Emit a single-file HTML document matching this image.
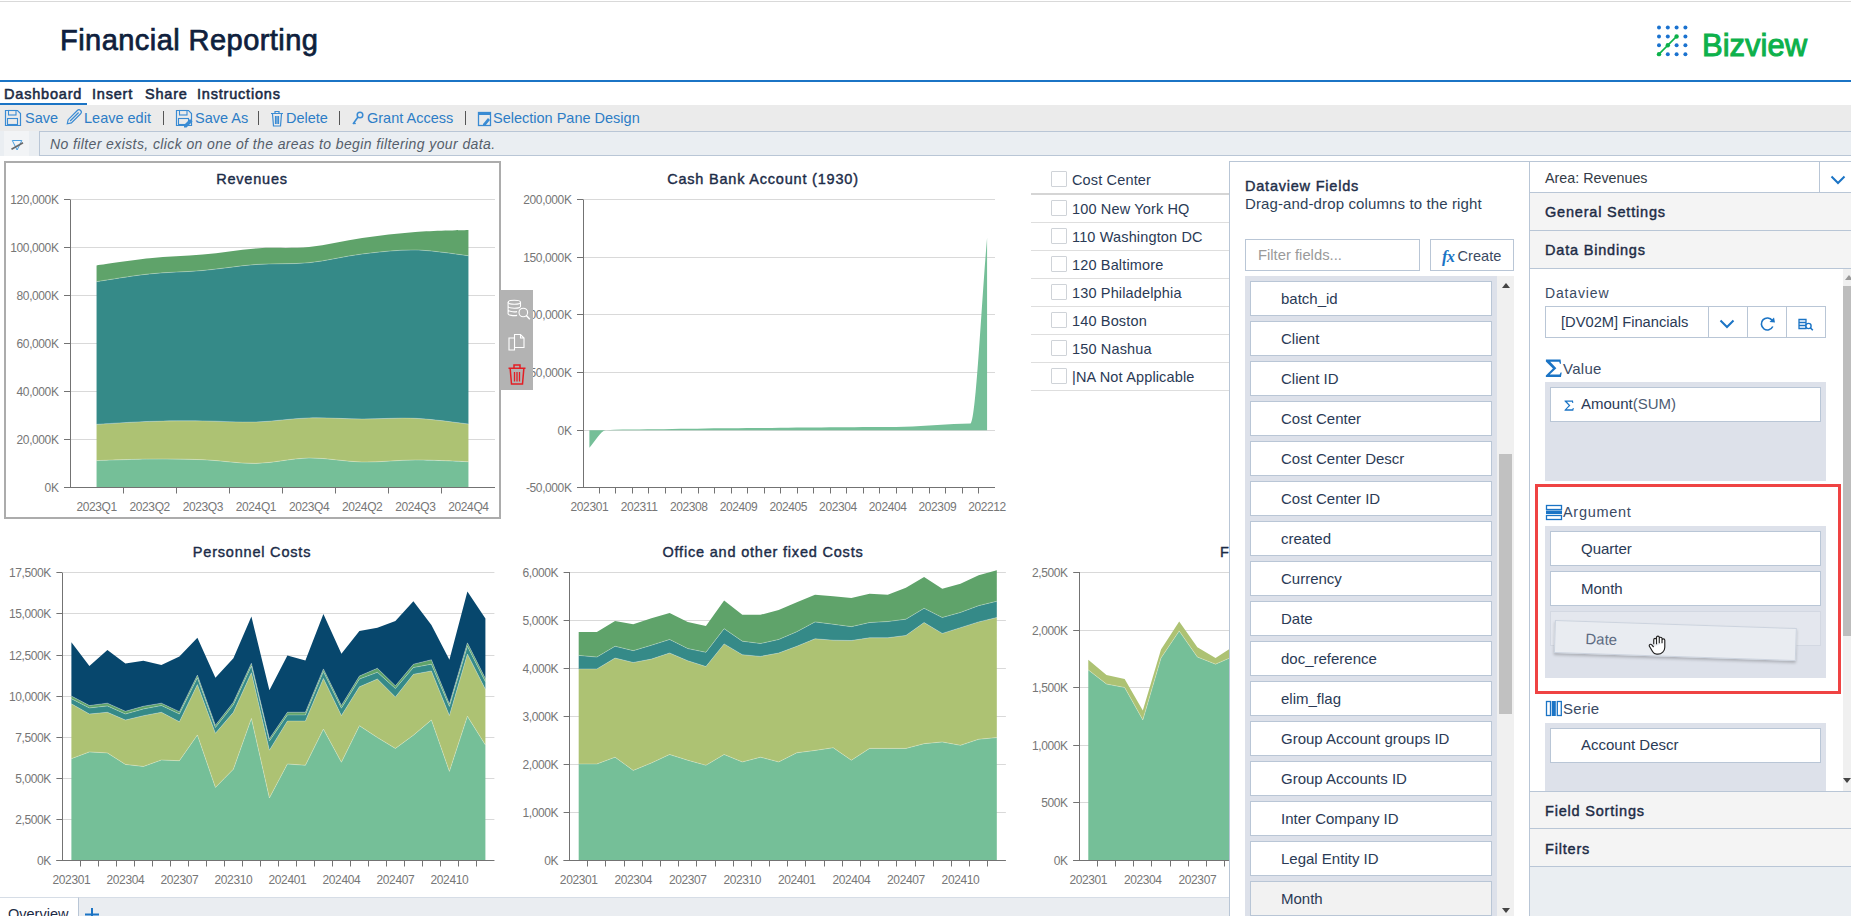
<!DOCTYPE html>
<html><head><meta charset="utf-8">
<style>
*{box-sizing:border-box;}
html,body{margin:0;padding:0;}
body{width:1851px;height:916px;overflow:hidden;position:relative;background:#fff;font-family:"Liberation Sans",sans-serif;color:#1d2b45;}
.a{position:absolute;}
.t{position:absolute;white-space:nowrap;line-height:1;}
#topline{left:0;top:1px;width:1851px;height:1px;background:#d9d9d9;}
#title{left:60px;top:26px;font-size:29px;color:#0f1f3d;-webkit-text-stroke:0.75px #0f1f3d;letter-spacing:0.45px;}
#blueline{left:0;top:80px;width:1851px;height:2px;background:#1b74c5;}
.tab{top:87px;font-size:14.5px;color:#1b2a44;-webkit-text-stroke:0.55px #1b2a44;letter-spacing:0.8px;}
#tabul{left:0;top:103px;width:87px;height:2px;background:#1b74c5;}
#toolbar{left:0;top:105px;width:1851px;height:26px;background:#ebebeb;}
.tb{top:111px;font-size:14.5px;color:#2d7dc6;}
.sep{top:111px;width:1px;height:14px;background:#555;}
#filterbar{left:0;top:131px;width:1851px;height:25px;background:#eaeef2;}
#filtericon{left:4px;top:131px;width:25px;height:25px;background:#f2f4f6;}
#filterinput{left:39px;top:131px;width:1820px;height:25px;border:1px solid #b9c6d6;}
#filtertext{left:50px;top:137px;font-size:14px;font-style:italic;color:#555e6b;letter-spacing:0.4px;}
#tabbar{left:0;top:897px;width:1229px;height:19px;background:#eaedf1;border-top:1px solid #d6dde6;}
#ovtab{left:0;top:897px;width:79px;height:19px;background:#fff;border-right:1px solid #b9c6d6;border-top:1px solid #d6dde6;}
svg text{font-family:"Liberation Sans",sans-serif;}
.yl{font-size:12px;fill:#767676;letter-spacing:-0.4px;}
.xl{font-size:12px;fill:#767676;letter-spacing:-0.4px;}
.ct{font-size:14.5px;fill:#1c2c48;stroke:#1c2c48;stroke-width:0.4px;letter-spacing:0.8px;}
#revbox{left:4px;top:161px;width:497px;height:358px;border:2px solid #acacac;}
#ftool{left:500px;top:290px;width:33px;height:100px;background:#b3b3b3;}
/* cost center list */
.ccrow{left:1031px;width:198px;height:1px;background:#dedede;}
.cb{width:16px;height:16px;border:1px solid #cfd3d8;background:#fff;border-radius:1px;}
.cct{font-size:14.5px;color:#2a3a55;letter-spacing:0.15px;}
/* dataview fields panel */
#dvp{left:1229px;top:161px;width:301px;height:755px;background:#fff;border-left:1px solid #b9c6d6;border-top:1px solid #b9c6d6;}
#dvtitle{left:1245px;top:179px;font-size:14.5px;color:#1f2f4a;-webkit-text-stroke:0.42px #1f2f4a;letter-spacing:0.78px;}
#dvsub{left:1245px;top:196px;font-size:15px;color:#2f3f58;letter-spacing:0.12px;}
#filt{left:1245px;top:239px;width:175px;height:32px;border:1px solid #b9c6d6;background:#fff;}
#filtph{left:1258px;top:248px;font-size:14.8px;color:#9a9a9a;}
#create{left:1430px;top:239px;width:84px;height:32px;border:1px solid #b9c6d6;background:#fff;}
#list{left:1245px;top:276px;width:252px;height:640px;background:#dde1ea;}
#lscroll{left:1497px;top:276px;width:17px;height:640px;background:#f0f0f0;}
#lthumb{left:1499px;top:454px;width:13px;height:260px;background:#c1c1c1;}
.fi{left:1250px;width:242px;height:35px;background:#fff;border:1px solid #b9c6d6;}
.fit{left:1281px;font-size:15px;color:#2a3a55;}
/* right panel */
#rp{left:1529px;top:161px;width:322px;height:755px;background:#eaeef2;border-left:1px solid #b9c6d6;border-top:1px solid #b9c6d6;}
.rrow{left:1530px;width:321px;background:#f4f4f4;border-bottom:1px solid #b9c6d6;}
.rh{left:1545px;font-size:14.5px;color:#1d2b45;-webkit-text-stroke:0.42px #1d2b45;letter-spacing:0.8px;}
.zone{left:1545px;width:281px;background:#dde1ea;}
.zi{left:1550px;width:271px;height:35px;background:#fff;border:1px solid #b9c6d6;}
.zit{left:1581px;font-size:15px;color:#2a3a55;}
.lab{font-size:14px;color:#3a4a64;}
</style></head><body>
<div class="a" id="topline"></div>
<div class="t" id="title">Financial Reporting</div>
<svg class="a" style="left:0;top:0" width="1851" height="80"><circle cx="1659" cy="27.6" r="2.0" fill="#1a72cf"/><circle cx="1667.8" cy="27.6" r="2.0" fill="#1a72cf"/><circle cx="1676.6" cy="27.6" r="2.0" fill="#1a72cf"/><circle cx="1685.4" cy="27.6" r="2.0" fill="#1a72cf"/><circle cx="1659" cy="36.45" r="2.0" fill="#1a72cf"/><circle cx="1667.8" cy="36.45" r="2.0" fill="#1a72cf"/><circle cx="1676.6" cy="36.45" r="2.2" fill="#0db14b"/><circle cx="1685.4" cy="36.45" r="2.0" fill="#1a72cf"/><circle cx="1659" cy="45.3" r="2.0" fill="#1a72cf"/><circle cx="1667.8" cy="45.3" r="2.2" fill="#0db14b"/><circle cx="1676.6" cy="45.3" r="2.0" fill="#1a72cf"/><circle cx="1685.4" cy="45.3" r="2.0" fill="#1a72cf"/><circle cx="1659" cy="54.15" r="2.2" fill="#0db14b"/><circle cx="1667.8" cy="54.15" r="2.0" fill="#1a72cf"/><circle cx="1676.6" cy="54.15" r="2.0" fill="#1a72cf"/><circle cx="1685.4" cy="54.15" r="2.0" fill="#1a72cf"/><line x1="1659" y1="54.1" x2="1676.6" y2="36.4" stroke="#0db14b" stroke-width="1.6"/></svg><div class="t" style="left:1702px;top:29.5px;font-size:31px;color:#0db14b;-webkit-text-stroke:1.0px #0db14b;letter-spacing:0px">Bizview</div>
<div class="a" id="blueline"></div>
<div class="t tab" style="left:4px">Dashboard</div>
<div class="t tab" style="left:92px">Insert</div>
<div class="t tab" style="left:145px">Share</div>
<div class="t tab" style="left:197px">Instructions</div>
<div class="a" id="tabul"></div>
<div class="a" id="toolbar"></div>
<svg class="a" style="left:0;top:105px" width="500" height="26"><path d="M5.5,5.5 h12 l3,3 v12 h-15 z" fill="none" stroke="#3a8bd3" stroke-width="1.2"/><rect x="8.5" y="5.5" width="7.5" height="4.5" fill="none" stroke="#3a8bd3" stroke-width="1.1"/><rect x="7.5" y="13.5" width="10" height="6" fill="none" stroke="#3a8bd3" stroke-width="1.1"/><g transform="translate(67.3,18.8) rotate(-45)" fill="none" stroke="#3a8bd3" stroke-width="1.2"><path d="M0,0 L3.5,-2.3 H16.5 a2.3,2.3 0 0 1 0,4.6 H3.5 Z"/><path d="M4,0 H16"/></g><path d="M176.5,5.5 h12 l3,3 v12 h-15 z" fill="none" stroke="#3a8bd3" stroke-width="1.2"/><rect x="179.5" y="5.5" width="7.5" height="4.5" fill="none" stroke="#3a8bd3" stroke-width="1.1"/><rect x="178.5" y="13.5" width="10" height="6" fill="none" stroke="#3a8bd3" stroke-width="1.1"/><path d="M184,20 l6,-6 l2.5,2.5 l-6,6 h-2.5z" fill="#3a8bd3"/><path d="M271,8.5 h12 M275,8.5 v-2 h4 v2 M272.5,9 l1,12 h7 l1,-12 M275.5,11 v8 M277,11 v8 M278.5,11 v8" fill="none" stroke="#3a8bd3" stroke-width="1.2"/><circle cx="360" cy="10" r="2.8" fill="none" stroke="#3a8bd3" stroke-width="1.5"/><path d="M358,12 l-5,7 M354,17.5 l1.5,1.5" stroke="#3a8bd3" stroke-width="1.6"/><rect x="478.5" y="7.5" width="12" height="13" fill="none" stroke="#3a8bd3" stroke-width="1.3"/><rect x="478" y="7" width="13" height="3" fill="#3a8bd3"/><path d="M483,19 l5,-6 l2,2 l-5,6 h-2z" fill="#3a8bd3"/></svg>
<div class="t tb" style="left:25px">Save</div>
<div class="t tb" style="left:84px">Leave edit</div>
<div class="a sep" style="left:163px"></div>
<div class="t tb" style="left:195px">Save As</div>
<div class="a sep" style="left:258px"></div>
<div class="t tb" style="left:286px">Delete</div>
<div class="a sep" style="left:339px"></div>
<div class="t tb" style="left:367px">Grant Access</div>
<div class="a sep" style="left:465px"></div>
<div class="t tb" style="left:493px">Selection Pane Design</div>
<div class="a" id="filterbar"></div>
<div class="a" id="filtericon"></div>
<div class="a" id="filterinput"></div>
<svg class="a" style="left:0;top:125px" width="39" height="31"><path d="M12.3,15.5 h9.5 l-4.7,9.5z" fill="none" stroke="#4a9fe0" stroke-width="1"/><line x1="11.5" y1="24.3" x2="23" y2="17.8" stroke="#6a6a6a" stroke-width="1.7"/></svg>
<div class="t" id="filtertext">No filter exists, click on one of the areas to begin filtering your data.</div>

<svg class="a" style="left:0;top:0" width="1851" height="916" viewBox="0 0 1851 916" shape-rendering="auto">
<line x1="70" y1="199.5" x2="495" y2="199.5" stroke="#d9d9d9"/>
<line x1="70" y1="247.5" x2="495" y2="247.5" stroke="#d9d9d9"/>
<line x1="70" y1="295.5" x2="495" y2="295.5" stroke="#d9d9d9"/>
<line x1="70" y1="343.5" x2="495" y2="343.5" stroke="#d9d9d9"/>
<line x1="70" y1="391.5" x2="495" y2="391.5" stroke="#d9d9d9"/>
<line x1="70" y1="439.5" x2="495" y2="439.5" stroke="#d9d9d9"/>
<line x1="70" y1="487.5" x2="495" y2="487.5" stroke="#d9d9d9"/>
<path d="M96.56,460.6 C105.42,460.35 131.98,459.25 149.69,459.1 C167.4,458.95 185.1,458.98 202.81,459.7 C220.52,460.42 238.23,463.68 255.94,463.4 C273.65,463.12 291.35,458.23 309.06,458 C326.77,457.77 344.48,461.67 362.19,462 C379.9,462.33 397.6,460.05 415.31,460 C433.02,459.95 459.58,461.42 468.44,461.7 L468.44,487.5 C459.58,487.5 433.02,487.5 415.31,487.5 C397.6,487.5 379.9,487.5 362.19,487.5 C344.48,487.5 326.77,487.5 309.06,487.5 C291.35,487.5 273.65,487.5 255.94,487.5 C238.23,487.5 220.52,487.5 202.81,487.5 C185.1,487.5 167.4,487.5 149.69,487.5 C131.98,487.5 105.42,487.5 96.56,487.5 Z" fill="#75bf98"/>
<path d="M96.56,424.3 C105.42,423.82 131.98,421.97 149.69,421.4 C167.4,420.83 185.1,420.8 202.81,420.9 C220.52,421 238.23,422.5 255.94,422 C273.65,421.5 291.35,418.4 309.06,417.9 C326.77,417.4 344.48,418.93 362.19,419 C379.9,419.07 397.6,417.47 415.31,418.3 C433.02,419.13 459.58,423.05 468.44,424 L468.44,461.7 C459.58,461.42 433.02,459.95 415.31,460 C397.6,460.05 379.9,462.33 362.19,462 C344.48,461.67 326.77,457.77 309.06,458 C291.35,458.23 273.65,463.12 255.94,463.4 C238.23,463.68 220.52,460.42 202.81,459.7 C185.1,458.98 167.4,458.95 149.69,459.1 C131.98,459.25 105.42,460.35 96.56,460.6 Z" fill="#adc273"/>
<path d="M96.56,281.6 C105.42,280.32 131.98,275.75 149.69,273.9 C167.4,272.05 185.1,272.07 202.81,270.5 C220.52,268.93 238.23,265.8 255.94,264.5 C273.65,263.2 291.35,264.45 309.06,262.7 C326.77,260.95 344.48,256.12 362.19,254 C379.9,251.88 397.6,249.72 415.31,250 C433.02,250.28 459.58,254.75 468.44,255.7 L468.44,424 C459.58,423.05 433.02,419.13 415.31,418.3 C397.6,417.47 379.9,419.07 362.19,419 C344.48,418.93 326.77,417.4 309.06,417.9 C291.35,418.4 273.65,421.5 255.94,422 C238.23,422.5 220.52,421 202.81,420.9 C185.1,420.8 167.4,420.83 149.69,421.4 C131.98,421.97 105.42,423.82 96.56,424.3 Z" fill="#358a88"/>
<path d="M96.56,265.4 C105.42,264.22 131.98,260.1 149.69,258.3 C167.4,256.5 185.1,256.25 202.81,254.6 C220.52,252.95 238.23,249.67 255.94,248.4 C273.65,247.13 291.35,248.73 309.06,247 C326.77,245.27 344.48,240.5 362.19,238 C379.9,235.5 397.6,233.33 415.31,232 C433.02,230.67 459.58,230.33 468.44,230 L468.44,255.7 C459.58,254.75 433.02,250.28 415.31,250 C397.6,249.72 379.9,251.88 362.19,254 C344.48,256.12 326.77,260.95 309.06,262.7 C291.35,264.45 273.65,263.2 255.94,264.5 C238.23,265.8 220.52,268.93 202.81,270.5 C185.1,272.07 167.4,272.05 149.69,273.9 C131.98,275.75 105.42,280.32 96.56,281.6 Z" fill="#5fa36a"/>
<path d="M96.56,460.6 C105.42,460.35 131.98,459.25 149.69,459.1 C167.4,458.95 185.1,458.98 202.81,459.7 C220.52,460.42 238.23,463.68 255.94,463.4 C273.65,463.12 291.35,458.23 309.06,458 C326.77,457.77 344.48,461.67 362.19,462 C379.9,462.33 397.6,460.05 415.31,460 C433.02,459.95 459.58,461.42 468.44,461.7" fill="none" stroke="#fff" stroke-opacity="0.35" stroke-width="0.8"/>
<path d="M96.56,424.3 C105.42,423.82 131.98,421.97 149.69,421.4 C167.4,420.83 185.1,420.8 202.81,420.9 C220.52,421 238.23,422.5 255.94,422 C273.65,421.5 291.35,418.4 309.06,417.9 C326.77,417.4 344.48,418.93 362.19,419 C379.9,419.07 397.6,417.47 415.31,418.3 C433.02,419.13 459.58,423.05 468.44,424" fill="none" stroke="#fff" stroke-opacity="0.35" stroke-width="0.8"/>
<path d="M96.56,281.6 C105.42,280.32 131.98,275.75 149.69,273.9 C167.4,272.05 185.1,272.07 202.81,270.5 C220.52,268.93 238.23,265.8 255.94,264.5 C273.65,263.2 291.35,264.45 309.06,262.7 C326.77,260.95 344.48,256.12 362.19,254 C379.9,251.88 397.6,249.72 415.31,250 C433.02,250.28 459.58,254.75 468.44,255.7" fill="none" stroke="#fff" stroke-opacity="0.35" stroke-width="0.8"/>
<line x1="70.5" y1="200" x2="70.5" y2="487.5" stroke="#737373"/>
<line x1="64" y1="487.5" x2="495" y2="487.5" stroke="#737373"/>
<line x1="64" y1="199.5" x2="70.5" y2="199.5" stroke="#737373"/>
<text x="58.5" y="204" text-anchor="end" class="yl">120,000K</text>
<line x1="64" y1="247.5" x2="70.5" y2="247.5" stroke="#737373"/>
<text x="58.5" y="252" text-anchor="end" class="yl">100,000K</text>
<line x1="64" y1="295.5" x2="70.5" y2="295.5" stroke="#737373"/>
<text x="58.5" y="300" text-anchor="end" class="yl">80,000K</text>
<line x1="64" y1="343.5" x2="70.5" y2="343.5" stroke="#737373"/>
<text x="58.5" y="348" text-anchor="end" class="yl">60,000K</text>
<line x1="64" y1="391.5" x2="70.5" y2="391.5" stroke="#737373"/>
<text x="58.5" y="396" text-anchor="end" class="yl">40,000K</text>
<line x1="64" y1="439.5" x2="70.5" y2="439.5" stroke="#737373"/>
<text x="58.5" y="444" text-anchor="end" class="yl">20,000K</text>
<line x1="64" y1="487.5" x2="70.5" y2="487.5" stroke="#737373"/>
<text x="58.5" y="492" text-anchor="end" class="yl">0K</text>
<line x1="123.5" y1="487.5" x2="123.5" y2="493.5" stroke="#737373"/>
<line x1="176.5" y1="487.5" x2="176.5" y2="493.5" stroke="#737373"/>
<line x1="229.5" y1="487.5" x2="229.5" y2="493.5" stroke="#737373"/>
<line x1="282.5" y1="487.5" x2="282.5" y2="493.5" stroke="#737373"/>
<line x1="335.5" y1="487.5" x2="335.5" y2="493.5" stroke="#737373"/>
<line x1="388.5" y1="487.5" x2="388.5" y2="493.5" stroke="#737373"/>
<line x1="441.5" y1="487.5" x2="441.5" y2="493.5" stroke="#737373"/>
<text x="96.56" y="511" text-anchor="middle" class="xl">2023Q1</text>
<text x="149.69" y="511" text-anchor="middle" class="xl">2023Q2</text>
<text x="202.81" y="511" text-anchor="middle" class="xl">2023Q3</text>
<text x="255.94" y="511" text-anchor="middle" class="xl">2024Q1</text>
<text x="309.06" y="511" text-anchor="middle" class="xl">2023Q4</text>
<text x="362.19" y="511" text-anchor="middle" class="xl">2024Q2</text>
<text x="415.31" y="511" text-anchor="middle" class="xl">2024Q3</text>
<text x="468.44" y="511" text-anchor="middle" class="xl">2024Q4</text>
<text x="252" y="184" text-anchor="middle" class="ct">Revenues</text>
<line x1="583" y1="199.5" x2="995" y2="199.5" stroke="#d9d9d9"/>
<line x1="583" y1="257.5" x2="995" y2="257.5" stroke="#d9d9d9"/>
<line x1="583" y1="314.5" x2="995" y2="314.5" stroke="#d9d9d9"/>
<line x1="583" y1="372.5" x2="995" y2="372.5" stroke="#d9d9d9"/>
<line x1="583" y1="430.5" x2="995" y2="430.5" stroke="#d9d9d9"/>
<line x1="583" y1="487.5" x2="995" y2="487.5" stroke="#d9d9d9"/>
<path d="M589.4,447.7 C594.92,441.87 600.45,430.59 605.97,430.2 C611.49,429.81 617.02,429.66 622.54,429.6 C628.06,429.54 633.59,429.54 639.11,429.5 C644.63,429.46 650.16,429.38 655.68,429.3 C661.2,429.22 666.73,429.08 672.25,429 C677.77,428.92 683.3,428.88 688.82,428.8 C694.34,428.72 699.87,428.58 705.39,428.5 C710.91,428.42 716.44,428.34 721.96,428.3 C727.48,428.26 733.01,428.24 738.53,428.2 C744.05,428.16 749.58,428.04 755.1,428 C760.62,427.96 766.15,427.94 771.67,427.9 C777.19,427.86 782.72,427.77 788.24,427.7 C793.76,427.63 799.29,427.54 804.81,427.5 C810.33,427.46 815.86,427.43 821.38,427.4 C826.9,427.37 832.43,427.33 837.95,427.3 C843.47,427.27 849,427.23 854.52,427.2 C860.04,427.17 865.57,427.13 871.09,427.1 C876.61,427.07 882.14,427.04 887.66,427 C893.18,426.96 898.71,426.91 904.23,426.8 C909.75,426.69 915.28,426.3 920.8,426 C926.32,425.7 931.85,425.33 937.37,425 C942.89,424.67 948.42,424.22 953.94,424 C959.46,423.78 964.99,423.83 970.51,423.5 C976.03,423.17 981.56,299.83 987.08,238 L987.08,430.2 C981.56,430.2 976.03,430.2 970.51,430.2 C964.99,430.2 959.46,430.2 953.94,430.2 C948.42,430.2 942.89,430.2 937.37,430.2 C931.85,430.2 926.32,430.2 920.8,430.2 C915.28,430.2 909.75,430.2 904.23,430.2 C898.71,430.2 893.18,430.2 887.66,430.2 C882.14,430.2 876.61,430.2 871.09,430.2 C865.57,430.2 860.04,430.2 854.52,430.2 C849,430.2 843.47,430.2 837.95,430.2 C832.43,430.2 826.9,430.2 821.38,430.2 C815.86,430.2 810.33,430.2 804.81,430.2 C799.29,430.2 793.76,430.2 788.24,430.2 C782.72,430.2 777.19,430.2 771.67,430.2 C766.15,430.2 760.62,430.2 755.1,430.2 C749.58,430.2 744.05,430.2 738.53,430.2 C733.01,430.2 727.48,430.2 721.96,430.2 C716.44,430.2 710.91,430.2 705.39,430.2 C699.87,430.2 694.34,430.2 688.82,430.2 C683.3,430.2 677.77,430.2 672.25,430.2 C666.73,430.2 661.2,430.2 655.68,430.2 C650.16,430.2 644.63,430.2 639.11,430.2 C633.59,430.2 628.06,430.2 622.54,430.2 C617.02,430.2 611.49,430.2 605.97,430.2 C600.45,430.2 594.92,430.2 589.4,430.2 Z" fill="#75bf98"/>
<line x1="583.5" y1="200" x2="583.5" y2="487.5" stroke="#737373"/>
<line x1="577" y1="487.5" x2="995" y2="487.5" stroke="#737373"/>
<line x1="577" y1="199.5" x2="583.5" y2="199.5" stroke="#737373"/>
<text x="571.5" y="204.1" text-anchor="end" class="yl">200,000K</text>
<line x1="577" y1="257.5" x2="583.5" y2="257.5" stroke="#737373"/>
<text x="571.5" y="261.7" text-anchor="end" class="yl">150,000K</text>
<line x1="577" y1="314.5" x2="583.5" y2="314.5" stroke="#737373"/>
<text x="571.5" y="319.3" text-anchor="end" class="yl">100,000K</text>
<line x1="577" y1="372.5" x2="583.5" y2="372.5" stroke="#737373"/>
<text x="571.5" y="376.9" text-anchor="end" class="yl">50,000K</text>
<line x1="577" y1="430.5" x2="583.5" y2="430.5" stroke="#737373"/>
<text x="571.5" y="434.5" text-anchor="end" class="yl">0K</text>
<line x1="577" y1="487.5" x2="583.5" y2="487.5" stroke="#737373"/>
<text x="571.5" y="492.1" text-anchor="end" class="yl">-50,000K</text>
<line x1="599.5" y1="487.5" x2="599.5" y2="493.5" stroke="#737373"/>
<line x1="615.5" y1="487.5" x2="615.5" y2="493.5" stroke="#737373"/>
<line x1="632.5" y1="487.5" x2="632.5" y2="493.5" stroke="#737373"/>
<line x1="648.5" y1="487.5" x2="648.5" y2="493.5" stroke="#737373"/>
<line x1="665.5" y1="487.5" x2="665.5" y2="493.5" stroke="#737373"/>
<line x1="681.5" y1="487.5" x2="681.5" y2="493.5" stroke="#737373"/>
<line x1="698.5" y1="487.5" x2="698.5" y2="493.5" stroke="#737373"/>
<line x1="714.5" y1="487.5" x2="714.5" y2="493.5" stroke="#737373"/>
<line x1="731.5" y1="487.5" x2="731.5" y2="493.5" stroke="#737373"/>
<line x1="747.5" y1="487.5" x2="747.5" y2="493.5" stroke="#737373"/>
<line x1="764.5" y1="487.5" x2="764.5" y2="493.5" stroke="#737373"/>
<line x1="780.5" y1="487.5" x2="780.5" y2="493.5" stroke="#737373"/>
<line x1="797.5" y1="487.5" x2="797.5" y2="493.5" stroke="#737373"/>
<line x1="813.5" y1="487.5" x2="813.5" y2="493.5" stroke="#737373"/>
<line x1="830.5" y1="487.5" x2="830.5" y2="493.5" stroke="#737373"/>
<line x1="846.5" y1="487.5" x2="846.5" y2="493.5" stroke="#737373"/>
<line x1="863.5" y1="487.5" x2="863.5" y2="493.5" stroke="#737373"/>
<line x1="879.5" y1="487.5" x2="879.5" y2="493.5" stroke="#737373"/>
<line x1="896.5" y1="487.5" x2="896.5" y2="493.5" stroke="#737373"/>
<line x1="912.5" y1="487.5" x2="912.5" y2="493.5" stroke="#737373"/>
<line x1="929.5" y1="487.5" x2="929.5" y2="493.5" stroke="#737373"/>
<line x1="945.5" y1="487.5" x2="945.5" y2="493.5" stroke="#737373"/>
<line x1="962.5" y1="487.5" x2="962.5" y2="493.5" stroke="#737373"/>
<line x1="978.5" y1="487.5" x2="978.5" y2="493.5" stroke="#737373"/>
<text x="589.4" y="511" text-anchor="middle" class="xl">202301</text>
<text x="639.11" y="511" text-anchor="middle" class="xl">202311</text>
<text x="688.82" y="511" text-anchor="middle" class="xl">202308</text>
<text x="738.53" y="511" text-anchor="middle" class="xl">202409</text>
<text x="788.24" y="511" text-anchor="middle" class="xl">202405</text>
<text x="837.95" y="511" text-anchor="middle" class="xl">202304</text>
<text x="887.66" y="511" text-anchor="middle" class="xl">202404</text>
<text x="937.37" y="511" text-anchor="middle" class="xl">202309</text>
<text x="987.08" y="511" text-anchor="middle" class="xl">202212</text>
<text x="763" y="183.5" text-anchor="middle" class="ct">Cash Bank Account (1930)</text>
<line x1="62.4" y1="572.5" x2="494.4" y2="572.5" stroke="#d9d9d9"/>
<line x1="62.4" y1="613.5" x2="494.4" y2="613.5" stroke="#d9d9d9"/>
<line x1="62.4" y1="655.5" x2="494.4" y2="655.5" stroke="#d9d9d9"/>
<line x1="62.4" y1="696.5" x2="494.4" y2="696.5" stroke="#d9d9d9"/>
<line x1="62.4" y1="737.5" x2="494.4" y2="737.5" stroke="#d9d9d9"/>
<line x1="62.4" y1="778.5" x2="494.4" y2="778.5" stroke="#d9d9d9"/>
<line x1="62.4" y1="819.5" x2="494.4" y2="819.5" stroke="#d9d9d9"/>
<line x1="62.4" y1="860.5" x2="494.4" y2="860.5" stroke="#d9d9d9"/>
<path d="M71.4,758.68 L89.4,751.91 L107.4,752.93 L125.4,764.43 L143.4,766.46 L161.4,760.03 L179.4,760.71 L197.4,734.99 L215.4,787.45 L233.4,769.17 L251.4,718.4 L269.4,797.94 L287.4,763.96 L305.4,765.31 L323.4,729.12 L341.4,762.27 L359.4,725.74 L377.4,737.57 L395.4,748.4 L413.4,735.21 L431.4,719.99 L449.4,771.4 L467.4,716.27 L485.4,745.02 L485.4,860.25 L467.4,860.25 L449.4,860.25 L431.4,860.25 L413.4,860.25 L395.4,860.25 L377.4,860.25 L359.4,860.25 L341.4,860.25 L323.4,860.25 L305.4,860.25 L287.4,860.25 L269.4,860.25 L251.4,860.25 L233.4,860.25 L215.4,860.25 L197.4,860.25 L179.4,860.25 L161.4,860.25 L143.4,860.25 L125.4,860.25 L107.4,860.25 L89.4,860.25 L71.4,860.25 Z" fill="#75bf98"/>
<path d="M71.4,703.85 L89.4,714 L107.4,712.31 L125.4,720.09 L143.4,715.69 L161.4,712.31 L179.4,721.79 L197.4,684.56 L215.4,733.29 L233.4,712.31 L251.4,672.71 L269.4,750.22 L287.4,721 L305.4,721 L323.4,678.38 L341.4,715.59 L359.4,686.84 L377.4,679.06 L395.4,696.99 L413.4,674.32 L431.4,670.94 L449.4,715.59 L467.4,654.03 L485.4,689.21 L485.4,745.02 L467.4,716.27 L449.4,771.4 L431.4,719.99 L413.4,735.21 L395.4,748.4 L377.4,737.57 L359.4,725.74 L341.4,762.27 L323.4,729.12 L305.4,765.31 L287.4,763.96 L269.4,797.94 L251.4,718.4 L233.4,769.17 L215.4,787.45 L197.4,734.99 L179.4,760.71 L161.4,760.03 L143.4,766.46 L125.4,764.43 L107.4,752.93 L89.4,751.91 L71.4,758.68 Z" fill="#adc273"/>
<path d="M71.4,698.77 L89.4,707.91 L107.4,705.88 L125.4,714 L143.4,708.93 L161.4,705.54 L179.4,714 L197.4,677.79 L215.4,727.54 L233.4,704.86 L251.4,665.94 L269.4,741.08 L287.4,714.91 L305.4,714.91 L323.4,671.62 L341.4,708.15 L359.4,679.06 L377.4,672.29 L395.4,688.53 L413.4,667.56 L431.4,664.18 L449.4,706.46 L467.4,646.25 L485.4,681.77 L485.4,689.21 L467.4,654.03 L449.4,715.59 L431.4,670.94 L413.4,674.32 L395.4,696.99 L377.4,679.06 L359.4,686.84 L341.4,715.59 L323.4,678.38 L305.4,721 L287.4,721 L269.4,750.22 L251.4,672.71 L233.4,712.31 L215.4,733.29 L197.4,684.56 L179.4,721.79 L161.4,712.31 L143.4,715.69 L125.4,720.09 L107.4,712.31 L89.4,714 L71.4,703.85 Z" fill="#358a88"/>
<path d="M71.4,696.06 L89.4,705.54 L107.4,703.17 L125.4,711.29 L143.4,706.22 L161.4,703.17 L179.4,711.63 L197.4,675.08 L215.4,725.17 L233.4,702.16 L251.4,663.23 L269.4,738.71 L287.4,712.21 L305.4,712.21 L323.4,668.91 L341.4,705.44 L359.4,676.02 L377.4,668.24 L395.4,685.82 L413.4,664.18 L431.4,659.78 L449.4,703.75 L467.4,642.87 L485.4,678.38 L485.4,681.77 L467.4,646.25 L449.4,706.46 L431.4,664.18 L413.4,667.56 L395.4,688.53 L377.4,672.29 L359.4,679.06 L341.4,708.15 L323.4,671.62 L305.4,714.91 L287.4,714.91 L269.4,741.08 L251.4,665.94 L233.4,704.86 L215.4,727.54 L197.4,677.79 L179.4,714 L161.4,705.54 L143.4,708.93 L125.4,714 L107.4,705.88 L89.4,707.91 L71.4,698.77 Z" fill="#5fa36a"/>
<path d="M71.4,642.25 L89.4,665.94 L107.4,650.03 L125.4,663.57 L143.4,660.86 L161.4,664.92 L179.4,656.46 L197.4,637.85 L215.4,677.79 L233.4,658.16 L251.4,616.52 L269.4,690.31 L287.4,655.38 L305.4,660.46 L323.4,614.12 L341.4,653.69 L359.4,631.03 L377.4,627.65 L395.4,620.88 L413.4,601.27 L431.4,624.94 L449.4,659.78 L467.4,591.46 L485.4,618.52 L485.4,678.38 L467.4,642.87 L449.4,703.75 L431.4,659.78 L413.4,664.18 L395.4,685.82 L377.4,668.24 L359.4,676.02 L341.4,705.44 L323.4,668.91 L305.4,712.21 L287.4,712.21 L269.4,738.71 L251.4,663.23 L233.4,702.16 L215.4,725.17 L197.4,675.08 L179.4,711.63 L161.4,703.17 L143.4,706.22 L125.4,711.29 L107.4,703.17 L89.4,705.54 L71.4,696.06 Z" fill="#07476d"/>
<path d="M71.4,758.68 L89.4,751.91 L107.4,752.93 L125.4,764.43 L143.4,766.46 L161.4,760.03 L179.4,760.71 L197.4,734.99 L215.4,787.45 L233.4,769.17 L251.4,718.4 L269.4,797.94 L287.4,763.96 L305.4,765.31 L323.4,729.12 L341.4,762.27 L359.4,725.74 L377.4,737.57 L395.4,748.4 L413.4,735.21 L431.4,719.99 L449.4,771.4 L467.4,716.27 L485.4,745.02" fill="none" stroke="#fff" stroke-opacity="0.35" stroke-width="0.8"/>
<path d="M71.4,703.85 L89.4,714 L107.4,712.31 L125.4,720.09 L143.4,715.69 L161.4,712.31 L179.4,721.79 L197.4,684.56 L215.4,733.29 L233.4,712.31 L251.4,672.71 L269.4,750.22 L287.4,721 L305.4,721 L323.4,678.38 L341.4,715.59 L359.4,686.84 L377.4,679.06 L395.4,696.99 L413.4,674.32 L431.4,670.94 L449.4,715.59 L467.4,654.03 L485.4,689.21" fill="none" stroke="#fff" stroke-opacity="0.35" stroke-width="0.8"/>
<path d="M71.4,698.77 L89.4,707.91 L107.4,705.88 L125.4,714 L143.4,708.93 L161.4,705.54 L179.4,714 L197.4,677.79 L215.4,727.54 L233.4,704.86 L251.4,665.94 L269.4,741.08 L287.4,714.91 L305.4,714.91 L323.4,671.62 L341.4,708.15 L359.4,679.06 L377.4,672.29 L395.4,688.53 L413.4,667.56 L431.4,664.18 L449.4,706.46 L467.4,646.25 L485.4,681.77" fill="none" stroke="#fff" stroke-opacity="0.35" stroke-width="0.8"/>
<path d="M71.4,696.06 L89.4,705.54 L107.4,703.17 L125.4,711.29 L143.4,706.22 L161.4,703.17 L179.4,711.63 L197.4,675.08 L215.4,725.17 L233.4,702.16 L251.4,663.23 L269.4,738.71 L287.4,712.21 L305.4,712.21 L323.4,668.91 L341.4,705.44 L359.4,676.02 L377.4,668.24 L395.4,685.82 L413.4,664.18 L431.4,659.78 L449.4,703.75 L467.4,642.87 L485.4,678.38" fill="none" stroke="#fff" stroke-opacity="0.35" stroke-width="0.8"/>
<line x1="62.5" y1="573" x2="62.5" y2="860.5" stroke="#737373"/>
<line x1="56.4" y1="860.5" x2="494.4" y2="860.5" stroke="#737373"/>
<line x1="56.4" y1="572.5" x2="62.5" y2="572.5" stroke="#737373"/>
<text x="50.9" y="577.4" text-anchor="end" class="yl">17,500K</text>
<line x1="56.4" y1="613.5" x2="62.5" y2="613.5" stroke="#737373"/>
<text x="50.9" y="618.45" text-anchor="end" class="yl">15,000K</text>
<line x1="56.4" y1="655.5" x2="62.5" y2="655.5" stroke="#737373"/>
<text x="50.9" y="659.5" text-anchor="end" class="yl">12,500K</text>
<line x1="56.4" y1="696.5" x2="62.5" y2="696.5" stroke="#737373"/>
<text x="50.9" y="700.55" text-anchor="end" class="yl">10,000K</text>
<line x1="56.4" y1="737.5" x2="62.5" y2="737.5" stroke="#737373"/>
<text x="50.9" y="741.6" text-anchor="end" class="yl">7,500K</text>
<line x1="56.4" y1="778.5" x2="62.5" y2="778.5" stroke="#737373"/>
<text x="50.9" y="782.65" text-anchor="end" class="yl">5,000K</text>
<line x1="56.4" y1="819.5" x2="62.5" y2="819.5" stroke="#737373"/>
<text x="50.9" y="823.7" text-anchor="end" class="yl">2,500K</text>
<line x1="56.4" y1="860.5" x2="62.5" y2="860.5" stroke="#737373"/>
<text x="50.9" y="864.75" text-anchor="end" class="yl">0K</text>
<line x1="80.5" y1="860.5" x2="80.5" y2="866.5" stroke="#737373"/>
<line x1="98.5" y1="860.5" x2="98.5" y2="866.5" stroke="#737373"/>
<line x1="116.5" y1="860.5" x2="116.5" y2="866.5" stroke="#737373"/>
<line x1="134.5" y1="860.5" x2="134.5" y2="866.5" stroke="#737373"/>
<line x1="152.5" y1="860.5" x2="152.5" y2="866.5" stroke="#737373"/>
<line x1="170.5" y1="860.5" x2="170.5" y2="866.5" stroke="#737373"/>
<line x1="188.5" y1="860.5" x2="188.5" y2="866.5" stroke="#737373"/>
<line x1="206.5" y1="860.5" x2="206.5" y2="866.5" stroke="#737373"/>
<line x1="224.5" y1="860.5" x2="224.5" y2="866.5" stroke="#737373"/>
<line x1="242.5" y1="860.5" x2="242.5" y2="866.5" stroke="#737373"/>
<line x1="260.5" y1="860.5" x2="260.5" y2="866.5" stroke="#737373"/>
<line x1="278.5" y1="860.5" x2="278.5" y2="866.5" stroke="#737373"/>
<line x1="296.5" y1="860.5" x2="296.5" y2="866.5" stroke="#737373"/>
<line x1="314.5" y1="860.5" x2="314.5" y2="866.5" stroke="#737373"/>
<line x1="332.5" y1="860.5" x2="332.5" y2="866.5" stroke="#737373"/>
<line x1="350.5" y1="860.5" x2="350.5" y2="866.5" stroke="#737373"/>
<line x1="368.5" y1="860.5" x2="368.5" y2="866.5" stroke="#737373"/>
<line x1="386.5" y1="860.5" x2="386.5" y2="866.5" stroke="#737373"/>
<line x1="404.5" y1="860.5" x2="404.5" y2="866.5" stroke="#737373"/>
<line x1="422.5" y1="860.5" x2="422.5" y2="866.5" stroke="#737373"/>
<line x1="440.5" y1="860.5" x2="440.5" y2="866.5" stroke="#737373"/>
<line x1="458.5" y1="860.5" x2="458.5" y2="866.5" stroke="#737373"/>
<line x1="476.5" y1="860.5" x2="476.5" y2="866.5" stroke="#737373"/>
<text x="71.4" y="884" text-anchor="middle" class="xl">202301</text>
<text x="125.4" y="884" text-anchor="middle" class="xl">202304</text>
<text x="179.4" y="884" text-anchor="middle" class="xl">202307</text>
<text x="233.4" y="884" text-anchor="middle" class="xl">202310</text>
<text x="287.4" y="884" text-anchor="middle" class="xl">202401</text>
<text x="341.4" y="884" text-anchor="middle" class="xl">202404</text>
<text x="395.4" y="884" text-anchor="middle" class="xl">202407</text>
<text x="449.4" y="884" text-anchor="middle" class="xl">202410</text>
<text x="252" y="556.5" text-anchor="middle" class="ct">Personnel Costs</text>
<line x1="569.6" y1="572.5" x2="1005.9" y2="572.5" stroke="#d9d9d9"/>
<line x1="569.6" y1="620.5" x2="1005.9" y2="620.5" stroke="#d9d9d9"/>
<line x1="569.6" y1="668.5" x2="1005.9" y2="668.5" stroke="#d9d9d9"/>
<line x1="569.6" y1="716.5" x2="1005.9" y2="716.5" stroke="#d9d9d9"/>
<line x1="569.6" y1="764.5" x2="1005.9" y2="764.5" stroke="#d9d9d9"/>
<line x1="569.6" y1="812.5" x2="1005.9" y2="812.5" stroke="#d9d9d9"/>
<line x1="569.6" y1="860.5" x2="1005.9" y2="860.5" stroke="#d9d9d9"/>
<path d="M578.69,763.96 L596.87,763.96 L615.05,757.19 L633.23,770.38 L651.41,762.94 L669.59,754.49 L687.76,760.24 L705.94,765.31 L724.12,754.49 L742.3,761.93 L760.48,757.19 L778.66,761.93 L796.84,752.8 L815.02,750.43 L833.2,747.72 L851.38,760.24 L869.56,748.4 L887.74,748.4 L905.91,748.4 L924.09,743.66 L942.27,741.97 L960.45,745.35 L978.63,739.27 L996.81,737.57 L996.81,860.2 L978.63,860.2 L960.45,860.2 L942.27,860.2 L924.09,860.2 L905.91,860.2 L887.74,860.2 L869.56,860.2 L851.38,860.2 L833.2,860.2 L815.02,860.2 L796.84,860.2 L778.66,860.2 L760.48,860.2 L742.3,860.2 L724.12,860.2 L705.94,860.2 L687.76,860.2 L669.59,860.2 L651.41,860.2 L633.23,860.2 L615.05,860.2 L596.87,860.2 L578.69,860.2 Z" fill="#75bf98"/>
<path d="M578.69,668.91 L596.87,668.91 L615.05,658.09 L633.23,662.49 L651.41,659.1 L669.59,653.02 L687.76,660.79 L705.94,666.54 L724.12,643.88 L742.3,654.71 L760.48,656.4 L778.66,653.02 L796.84,646.25 L815.02,638.81 L833.2,640.16 L851.38,640.5 L869.56,637.79 L887.74,637.79 L905.91,635.43 L924.09,622.57 L942.27,633.4 L960.45,627.65 L978.63,621.9 L996.81,617.5 L996.81,737.57 L978.63,739.27 L960.45,745.35 L942.27,741.97 L924.09,743.66 L905.91,748.4 L887.74,748.4 L869.56,748.4 L851.38,760.24 L833.2,747.72 L815.02,750.43 L796.84,752.8 L778.66,761.93 L760.48,757.19 L742.3,761.93 L724.12,754.49 L705.94,765.31 L687.76,760.24 L669.59,754.49 L651.41,762.94 L633.23,770.38 L615.05,757.19 L596.87,763.96 L578.69,763.96 Z" fill="#adc273"/>
<path d="M578.69,655.38 L596.87,657.07 L615.05,646.25 L633.23,650.65 L651.41,645.24 L669.59,639.49 L687.76,648.62 L705.94,652.34 L724.12,628.66 L742.3,641.18 L760.48,643.54 L778.66,639.49 L796.84,631.71 L815.02,621.9 L833.2,624.27 L851.38,626.63 L869.56,622.57 L887.74,621.56 L905.91,619.19 L924.09,608.37 L942.27,617.5 L960.45,612.43 L978.63,605.66 L996.81,601.27 L996.81,617.5 L978.63,621.9 L960.45,627.65 L942.27,633.4 L924.09,622.57 L905.91,635.43 L887.74,637.79 L869.56,637.79 L851.38,640.5 L833.2,640.16 L815.02,638.81 L796.84,646.25 L778.66,653.02 L760.48,656.4 L742.3,654.71 L724.12,643.88 L705.94,666.54 L687.76,660.79 L669.59,653.02 L651.41,659.1 L633.23,662.49 L615.05,658.09 L596.87,668.91 L578.69,668.91 Z" fill="#358a88"/>
<path d="M578.69,632.04 L596.87,632.04 L615.05,620.88 L633.23,624.27 L651.41,618.18 L669.59,613.1 L687.76,621.9 L705.94,625.96 L724.12,600.59 L742.3,614.79 L760.48,614.79 L778.66,610.06 L796.84,602.28 L815.02,594.84 L833.2,596.19 L851.38,597.88 L869.56,593.82 L887.74,594.84 L905.91,587.74 L924.09,576.91 L942.27,588.75 L960.45,583.68 L978.63,575.22 L996.81,570.15 L996.81,601.27 L978.63,605.66 L960.45,612.43 L942.27,617.5 L924.09,608.37 L905.91,619.19 L887.74,621.56 L869.56,622.57 L851.38,626.63 L833.2,624.27 L815.02,621.9 L796.84,631.71 L778.66,639.49 L760.48,643.54 L742.3,641.18 L724.12,628.66 L705.94,652.34 L687.76,648.62 L669.59,639.49 L651.41,645.24 L633.23,650.65 L615.05,646.25 L596.87,657.07 L578.69,655.38 Z" fill="#5fa36a"/>
<path d="M578.69,763.96 L596.87,763.96 L615.05,757.19 L633.23,770.38 L651.41,762.94 L669.59,754.49 L687.76,760.24 L705.94,765.31 L724.12,754.49 L742.3,761.93 L760.48,757.19 L778.66,761.93 L796.84,752.8 L815.02,750.43 L833.2,747.72 L851.38,760.24 L869.56,748.4 L887.74,748.4 L905.91,748.4 L924.09,743.66 L942.27,741.97 L960.45,745.35 L978.63,739.27 L996.81,737.57" fill="none" stroke="#fff" stroke-opacity="0.35" stroke-width="0.8"/>
<path d="M578.69,668.91 L596.87,668.91 L615.05,658.09 L633.23,662.49 L651.41,659.1 L669.59,653.02 L687.76,660.79 L705.94,666.54 L724.12,643.88 L742.3,654.71 L760.48,656.4 L778.66,653.02 L796.84,646.25 L815.02,638.81 L833.2,640.16 L851.38,640.5 L869.56,637.79 L887.74,637.79 L905.91,635.43 L924.09,622.57 L942.27,633.4 L960.45,627.65 L978.63,621.9 L996.81,617.5" fill="none" stroke="#fff" stroke-opacity="0.35" stroke-width="0.8"/>
<path d="M578.69,655.38 L596.87,657.07 L615.05,646.25 L633.23,650.65 L651.41,645.24 L669.59,639.49 L687.76,648.62 L705.94,652.34 L724.12,628.66 L742.3,641.18 L760.48,643.54 L778.66,639.49 L796.84,631.71 L815.02,621.9 L833.2,624.27 L851.38,626.63 L869.56,622.57 L887.74,621.56 L905.91,619.19 L924.09,608.37 L942.27,617.5 L960.45,612.43 L978.63,605.66 L996.81,601.27" fill="none" stroke="#fff" stroke-opacity="0.35" stroke-width="0.8"/>
<line x1="569.5" y1="572" x2="569.5" y2="860.5" stroke="#737373"/>
<line x1="563.6" y1="860.5" x2="1005.9" y2="860.5" stroke="#737373"/>
<line x1="563.6" y1="572.5" x2="569.5" y2="572.5" stroke="#737373"/>
<text x="558.1" y="576.7" text-anchor="end" class="yl">6,000K</text>
<line x1="563.6" y1="620.5" x2="569.5" y2="620.5" stroke="#737373"/>
<text x="558.1" y="624.7" text-anchor="end" class="yl">5,000K</text>
<line x1="563.6" y1="668.5" x2="569.5" y2="668.5" stroke="#737373"/>
<text x="558.1" y="672.7" text-anchor="end" class="yl">4,000K</text>
<line x1="563.6" y1="716.5" x2="569.5" y2="716.5" stroke="#737373"/>
<text x="558.1" y="720.7" text-anchor="end" class="yl">3,000K</text>
<line x1="563.6" y1="764.5" x2="569.5" y2="764.5" stroke="#737373"/>
<text x="558.1" y="768.7" text-anchor="end" class="yl">2,000K</text>
<line x1="563.6" y1="812.5" x2="569.5" y2="812.5" stroke="#737373"/>
<text x="558.1" y="816.7" text-anchor="end" class="yl">1,000K</text>
<line x1="563.6" y1="860.5" x2="569.5" y2="860.5" stroke="#737373"/>
<text x="558.1" y="864.7" text-anchor="end" class="yl">0K</text>
<line x1="587.5" y1="860.5" x2="587.5" y2="866.5" stroke="#737373"/>
<line x1="605.5" y1="860.5" x2="605.5" y2="866.5" stroke="#737373"/>
<line x1="624.5" y1="860.5" x2="624.5" y2="866.5" stroke="#737373"/>
<line x1="642.5" y1="860.5" x2="642.5" y2="866.5" stroke="#737373"/>
<line x1="660.5" y1="860.5" x2="660.5" y2="866.5" stroke="#737373"/>
<line x1="678.5" y1="860.5" x2="678.5" y2="866.5" stroke="#737373"/>
<line x1="696.5" y1="860.5" x2="696.5" y2="866.5" stroke="#737373"/>
<line x1="715.5" y1="860.5" x2="715.5" y2="866.5" stroke="#737373"/>
<line x1="733.5" y1="860.5" x2="733.5" y2="866.5" stroke="#737373"/>
<line x1="751.5" y1="860.5" x2="751.5" y2="866.5" stroke="#737373"/>
<line x1="769.5" y1="860.5" x2="769.5" y2="866.5" stroke="#737373"/>
<line x1="787.5" y1="860.5" x2="787.5" y2="866.5" stroke="#737373"/>
<line x1="805.5" y1="860.5" x2="805.5" y2="866.5" stroke="#737373"/>
<line x1="824.5" y1="860.5" x2="824.5" y2="866.5" stroke="#737373"/>
<line x1="842.5" y1="860.5" x2="842.5" y2="866.5" stroke="#737373"/>
<line x1="860.5" y1="860.5" x2="860.5" y2="866.5" stroke="#737373"/>
<line x1="878.5" y1="860.5" x2="878.5" y2="866.5" stroke="#737373"/>
<line x1="896.5" y1="860.5" x2="896.5" y2="866.5" stroke="#737373"/>
<line x1="915.5" y1="860.5" x2="915.5" y2="866.5" stroke="#737373"/>
<line x1="933.5" y1="860.5" x2="933.5" y2="866.5" stroke="#737373"/>
<line x1="951.5" y1="860.5" x2="951.5" y2="866.5" stroke="#737373"/>
<line x1="969.5" y1="860.5" x2="969.5" y2="866.5" stroke="#737373"/>
<line x1="987.5" y1="860.5" x2="987.5" y2="866.5" stroke="#737373"/>
<text x="578.69" y="884" text-anchor="middle" class="xl">202301</text>
<text x="633.23" y="884" text-anchor="middle" class="xl">202304</text>
<text x="687.76" y="884" text-anchor="middle" class="xl">202307</text>
<text x="742.3" y="884" text-anchor="middle" class="xl">202310</text>
<text x="796.84" y="884" text-anchor="middle" class="xl">202401</text>
<text x="851.38" y="884" text-anchor="middle" class="xl">202404</text>
<text x="905.91" y="884" text-anchor="middle" class="xl">202407</text>
<text x="960.45" y="884" text-anchor="middle" class="xl">202410</text>
<text x="763" y="556.5" text-anchor="middle" class="ct">Office and other fixed Costs</text>
<line x1="1079.2" y1="572.5" x2="1515.5" y2="572.5" stroke="#d9d9d9"/>
<line x1="1079.2" y1="630.5" x2="1515.5" y2="630.5" stroke="#d9d9d9"/>
<line x1="1079.2" y1="687.5" x2="1515.5" y2="687.5" stroke="#d9d9d9"/>
<line x1="1079.2" y1="745.5" x2="1515.5" y2="745.5" stroke="#d9d9d9"/>
<line x1="1079.2" y1="802.5" x2="1515.5" y2="802.5" stroke="#d9d9d9"/>
<line x1="1079.2" y1="860.5" x2="1515.5" y2="860.5" stroke="#d9d9d9"/>
<path d="M1088.29,669.89 L1106.47,684.09 L1124.65,687.47 L1142.83,719.93 L1161.01,658.05 L1179.19,631 L1197.36,657.04 L1215.54,664.14 L1233.72,656.36 L1251.9,654.67 L1270.08,647.91 L1288.26,651.29 L1306.44,658.05 L1324.62,647.91 L1342.8,654.67 L1360.98,651.29 L1379.16,658.05 L1397.34,654.67 L1415.51,661.43 L1433.69,658.05 L1451.87,651.29 L1470.05,654.67 L1488.23,647.91 L1506.41,654.67 L1506.41,860 L1488.23,860 L1470.05,860 L1451.87,860 L1433.69,860 L1415.51,860 L1397.34,860 L1379.16,860 L1360.98,860 L1342.8,860 L1324.62,860 L1306.44,860 L1288.26,860 L1270.08,860 L1251.9,860 L1233.72,860 L1215.54,860 L1197.36,860 L1179.19,860 L1161.01,860 L1142.83,860 L1124.65,860 L1106.47,860 L1088.29,860 Z" fill="#75bf98"/>
<path d="M1088.29,659.74 L1106.47,674.96 L1124.65,679.02 L1142.83,710.46 L1161.01,649.6 L1179.19,621.54 L1197.36,647.23 L1215.54,658.05 L1233.72,646.22 L1251.9,644.53 L1270.08,637.77 L1288.26,641.15 L1306.44,647.91 L1324.62,637.77 L1342.8,644.53 L1360.98,641.15 L1379.16,647.91 L1397.34,644.53 L1415.51,651.29 L1433.69,647.91 L1451.87,641.15 L1470.05,644.53 L1488.23,637.77 L1506.41,644.53 L1506.41,654.67 L1488.23,647.91 L1470.05,654.67 L1451.87,651.29 L1433.69,658.05 L1415.51,661.43 L1397.34,654.67 L1379.16,658.05 L1360.98,651.29 L1342.8,654.67 L1324.62,647.91 L1306.44,658.05 L1288.26,651.29 L1270.08,647.91 L1251.9,654.67 L1233.72,656.36 L1215.54,664.14 L1197.36,657.04 L1179.19,631 L1161.01,658.05 L1142.83,719.93 L1124.65,687.47 L1106.47,684.09 L1088.29,669.89 Z" fill="#adc273"/>
<path d="M1088.29,669.89 L1106.47,684.09 L1124.65,687.47 L1142.83,719.93 L1161.01,658.05 L1179.19,631 L1197.36,657.04 L1215.54,664.14 L1233.72,656.36 L1251.9,654.67 L1270.08,647.91 L1288.26,651.29 L1306.44,658.05 L1324.62,647.91 L1342.8,654.67 L1360.98,651.29 L1379.16,658.05 L1397.34,654.67 L1415.51,661.43 L1433.69,658.05 L1451.87,651.29 L1470.05,654.67 L1488.23,647.91 L1506.41,654.67" fill="none" stroke="#fff" stroke-opacity="0.35" stroke-width="0.8"/>
<line x1="1079.5" y1="572" x2="1079.5" y2="860.5" stroke="#737373"/>
<line x1="1073.2" y1="860.5" x2="1515.5" y2="860.5" stroke="#737373"/>
<line x1="1073.2" y1="572.5" x2="1079.5" y2="572.5" stroke="#737373"/>
<text x="1067.7" y="577" text-anchor="end" class="yl">2,500K</text>
<line x1="1073.2" y1="630.5" x2="1079.5" y2="630.5" stroke="#737373"/>
<text x="1067.7" y="634.5" text-anchor="end" class="yl">2,000K</text>
<line x1="1073.2" y1="687.5" x2="1079.5" y2="687.5" stroke="#737373"/>
<text x="1067.7" y="692" text-anchor="end" class="yl">1,500K</text>
<line x1="1073.2" y1="745.5" x2="1079.5" y2="745.5" stroke="#737373"/>
<text x="1067.7" y="749.5" text-anchor="end" class="yl">1,000K</text>
<line x1="1073.2" y1="802.5" x2="1079.5" y2="802.5" stroke="#737373"/>
<text x="1067.7" y="807" text-anchor="end" class="yl">500K</text>
<line x1="1073.2" y1="860.5" x2="1079.5" y2="860.5" stroke="#737373"/>
<text x="1067.7" y="864.5" text-anchor="end" class="yl">0K</text>
<line x1="1097.5" y1="860.5" x2="1097.5" y2="866.5" stroke="#737373"/>
<line x1="1115.5" y1="860.5" x2="1115.5" y2="866.5" stroke="#737373"/>
<line x1="1133.5" y1="860.5" x2="1133.5" y2="866.5" stroke="#737373"/>
<line x1="1151.5" y1="860.5" x2="1151.5" y2="866.5" stroke="#737373"/>
<line x1="1170.5" y1="860.5" x2="1170.5" y2="866.5" stroke="#737373"/>
<line x1="1188.5" y1="860.5" x2="1188.5" y2="866.5" stroke="#737373"/>
<line x1="1206.5" y1="860.5" x2="1206.5" y2="866.5" stroke="#737373"/>
<line x1="1224.5" y1="860.5" x2="1224.5" y2="866.5" stroke="#737373"/>
<line x1="1242.5" y1="860.5" x2="1242.5" y2="866.5" stroke="#737373"/>
<line x1="1260.5" y1="860.5" x2="1260.5" y2="866.5" stroke="#737373"/>
<line x1="1279.5" y1="860.5" x2="1279.5" y2="866.5" stroke="#737373"/>
<line x1="1297.5" y1="860.5" x2="1297.5" y2="866.5" stroke="#737373"/>
<line x1="1315.5" y1="860.5" x2="1315.5" y2="866.5" stroke="#737373"/>
<line x1="1333.5" y1="860.5" x2="1333.5" y2="866.5" stroke="#737373"/>
<line x1="1351.5" y1="860.5" x2="1351.5" y2="866.5" stroke="#737373"/>
<line x1="1370.5" y1="860.5" x2="1370.5" y2="866.5" stroke="#737373"/>
<line x1="1388.5" y1="860.5" x2="1388.5" y2="866.5" stroke="#737373"/>
<line x1="1406.5" y1="860.5" x2="1406.5" y2="866.5" stroke="#737373"/>
<line x1="1424.5" y1="860.5" x2="1424.5" y2="866.5" stroke="#737373"/>
<line x1="1442.5" y1="860.5" x2="1442.5" y2="866.5" stroke="#737373"/>
<line x1="1460.5" y1="860.5" x2="1460.5" y2="866.5" stroke="#737373"/>
<line x1="1479.5" y1="860.5" x2="1479.5" y2="866.5" stroke="#737373"/>
<line x1="1497.5" y1="860.5" x2="1497.5" y2="866.5" stroke="#737373"/>
<text x="1088.29" y="884" text-anchor="middle" class="xl">202301</text>
<text x="1142.83" y="884" text-anchor="middle" class="xl">202304</text>
<text x="1197.36" y="884" text-anchor="middle" class="xl">202307</text>
<text x="1251.9" y="884" text-anchor="middle" class="xl">202310</text>
<text x="1306.44" y="884" text-anchor="middle" class="xl">202401</text>
<text x="1360.98" y="884" text-anchor="middle" class="xl">202404</text>
<text x="1415.51" y="884" text-anchor="middle" class="xl">202407</text>
<text x="1470.05" y="884" text-anchor="middle" class="xl">202410</text>
<text x="1220" y="556.5" class="ct">F</text>
</svg>
<div class="a" id="revbox"></div>
<div class="a" id="ftool"></div>
<svg class="a" style="left:500px;top:290px" width="33" height="100"><g fill="none" stroke="#ffffff" stroke-width="1.1"><ellipse cx="14.3" cy="12.3" rx="6.2" ry="2"/><path d="M8.1,12.3 v11.5 a6.2,2 0 0 0 9,1.6 M8.1,16.2 a6.2,2 0 0 0 12.4,0 v-3.9 M8.1,20 a6.2,2 0 0 0 9,1.6"/><circle cx="23.3" cy="22.5" r="4.3"/></g><line x1="26.3" y1="25.6" x2="29.8" y2="29.2" stroke="#ffffff" stroke-width="1.5"/><g fill="none" stroke="#ffffff" stroke-width="1.1"><path d="M14.5,44.5 h6 l3.5,3.5 v9.5 h-9.5z M20.5,44.5 v3.5 h3.5"/><path d="M9,48 h5.5 v12 h-5.5z" fill="#b3b3b3"/><path d="M14.5,48 l0,0"/></g><g fill="none" stroke="#e31e24" stroke-width="1.5"><path d="M8.5,78.3 h17 M14,77.8 v-2.8 h6 v2.8 M10.2,79 l1.3,15 h11 l1.3,-15"/><path d="M14.5,82 v9.5 M17,82 v9.5 M19.5,82 v9.5" stroke-width="1.3"/></g></svg>
<div class="a ccrow" style="top:193px;height:2px;background:#d5d5d5"></div>
<div class="a cb" style="left:1051px;top:171px"></div><div class="t cct" style="left:1072px;top:173px">Cost Center</div>
<div class="a ccrow" style="top:222px"></div>
<div class="a cb" style="left:1051px;top:200px"></div><div class="t cct" style="left:1072px;top:202px">100 New York HQ</div>
<div class="a ccrow" style="top:250px"></div>
<div class="a cb" style="left:1051px;top:228px"></div><div class="t cct" style="left:1072px;top:230px">110 Washington DC</div>
<div class="a ccrow" style="top:278px"></div>
<div class="a cb" style="left:1051px;top:256px"></div><div class="t cct" style="left:1072px;top:258px">120 Baltimore</div>
<div class="a ccrow" style="top:306px"></div>
<div class="a cb" style="left:1051px;top:284px"></div><div class="t cct" style="left:1072px;top:286px">130 Philadelphia</div>
<div class="a ccrow" style="top:334px"></div>
<div class="a cb" style="left:1051px;top:312px"></div><div class="t cct" style="left:1072px;top:314px">140 Boston</div>
<div class="a ccrow" style="top:362px"></div>
<div class="a cb" style="left:1051px;top:340px"></div><div class="t cct" style="left:1072px;top:342px">150 Nashua</div>
<div class="a ccrow" style="top:390px"></div>
<div class="a cb" style="left:1051px;top:368px"></div><div class="t cct" style="left:1072px;top:370px">|NA Not Applicable</div>
<div class="a ccrow" style="top:390px"></div>

<div class="a" id="tabbar"></div>
<div class="a" id="ovtab"></div>
<div class="t" style="left:8px;top:907px;font-size:14.5px;color:#1d2b45">Overview</div>
<svg class="a" style="left:84px;top:906px" width="16" height="10"><path d="M8,2 v12 M1,8.5 h14" stroke="#1b74c5" stroke-width="2"/></svg>

<div class="a" id="dvp"></div>
<div class="t" id="dvtitle">Dataview Fields</div>
<div class="t" id="dvsub">Drag-and-drop columns to the right</div>
<div class="a" id="filt"></div>
<div class="t" id="filtph">Filter fields...</div>
<div class="a" id="create"></div>
<div class="t" style="left:1442px;top:249px;font-size:16.5px;color:#1b74c5;font-style:italic;font-weight:bold;font-family:'Liberation Serif',serif;letter-spacing:-0.8px">fx</div>
<div class="t" style="left:1457.5px;top:249px;font-size:14.6px;color:#3b4a62">Create</div>
<div class="a" id="list"></div>
<div class="a fi" style="top:281px;background:#fff"></div><div class="t fit" style="top:291px">batch_id</div>
<div class="a fi" style="top:321px;background:#fff"></div><div class="t fit" style="top:331px">Client</div>
<div class="a fi" style="top:361px;background:#fff"></div><div class="t fit" style="top:371px">Client ID</div>
<div class="a fi" style="top:401px;background:#fff"></div><div class="t fit" style="top:411px">Cost Center</div>
<div class="a fi" style="top:441px;background:#fff"></div><div class="t fit" style="top:451px">Cost Center Descr</div>
<div class="a fi" style="top:481px;background:#fff"></div><div class="t fit" style="top:491px">Cost Center ID</div>
<div class="a fi" style="top:521px;background:#fff"></div><div class="t fit" style="top:531px">created</div>
<div class="a fi" style="top:561px;background:#fff"></div><div class="t fit" style="top:571px">Currency</div>
<div class="a fi" style="top:601px;background:#fff"></div><div class="t fit" style="top:611px">Date</div>
<div class="a fi" style="top:641px;background:#fff"></div><div class="t fit" style="top:651px">doc_reference</div>
<div class="a fi" style="top:681px;background:#fff"></div><div class="t fit" style="top:691px">elim_flag</div>
<div class="a fi" style="top:721px;background:#fff"></div><div class="t fit" style="top:731px">Group Account groups ID</div>
<div class="a fi" style="top:761px;background:#fff"></div><div class="t fit" style="top:771px">Group Accounts ID</div>
<div class="a fi" style="top:801px;background:#fff"></div><div class="t fit" style="top:811px">Inter Company ID</div>
<div class="a fi" style="top:841px;background:#fff"></div><div class="t fit" style="top:851px">Legal Entity ID</div>
<div class="a fi" style="top:881px;background:#f2f2f2"></div><div class="t fit" style="top:891px">Month</div>
<div class="a" id="lscroll"></div>
<div class="a" id="lthumb"></div>
<div class="a" style="left:1501.5px;top:282.5px;width:0;height:0;border-left:4px solid transparent;border-right:4px solid transparent;border-bottom:5px solid #444"></div>
<div class="a" style="left:1501.5px;top:908px;width:0;height:0;border-left:4px solid transparent;border-right:4px solid transparent;border-top:5px solid #444"></div>

<div class="a" id="rp"></div>
<div class="a" style="left:1530px;top:162px;width:321px;height:31px;background:#fff;border-bottom:1px solid #b9c6d6"></div>
<div class="t lab" style="left:1545px;top:171px;color:#333b47;font-size:14.3px">Area: Revenues</div>
<div class="a" style="left:1819px;top:162px;width:1px;height:30px;background:#b9c6d6"></div>
<svg class="a" style="left:1830px;top:173px" width="16" height="12"><path d="M1.5,3.5 l6.5,6.5 l6.5,-6.5" fill="none" stroke="#1b74c5" stroke-width="2"/></svg>
<div class="a rrow" style="top:193px;height:38px"></div><div class="t rh" style="top:205px">General Settings</div>
<div class="a rrow" style="top:231px;height:38px"></div><div class="t rh" style="top:243px">Data Bindings</div>
<div class="a" style="left:1530px;top:269px;width:321px;height:522px;background:#fff"></div>
<div class="a" style="left:1843px;top:269px;width:8px;height:522px;background:#f0f0f0"></div>
<div class="a" style="left:1843px;top:286px;width:8px;height:350px;background:#bdbdbd"></div>
<div class="a" style="left:1845px;top:275px;width:0;height:0;border-left:4px solid transparent;border-right:4px solid transparent;border-bottom:5px solid #999"></div>
<div class="t lab" style="left:1545px;top:286px;letter-spacing:0.85px">Dataview</div>
<div class="a" style="left:1545px;top:306px;width:281px;height:32px;border:1px solid #b9c6d6;background:#fff"></div>
<div class="a" style="left:1708px;top:306px;width:1px;height:32px;background:#b9c6d6"></div>
<div class="a" style="left:1747px;top:306px;width:1px;height:32px;background:#b9c6d6"></div>
<div class="a" style="left:1786px;top:306px;width:1px;height:32px;background:#b9c6d6"></div>
<div class="t lab" style="left:1561px;top:315px;color:#2a3a55;font-size:14.7px">[DV02M] Financials</div>
<svg class="a" style="left:1708px;top:306px" width="118" height="32"><path d="M12.5,14.5 l6.5,6.5 l6.5,-6.5" fill="none" stroke="#1b74c5" stroke-width="2"/><path d="M64.3,14.5 a6,6 0 1 0 0.5,6" fill="none" stroke="#1b74c5" stroke-width="1.6"/><path d="M61.5,16 l5.5,0.5 l-1,-5z" fill="#1b74c5"/><path d="M91,13.5 h7 v9 h-7z M91,16.5 h7 M91,19.5 h7" fill="none" stroke="#1b74c5" stroke-width="1.3"/><circle cx="100.5" cy="20" r="2.6" fill="#fff" stroke="#1b74c5" stroke-width="1.4"/><line x1="102.3" y1="21.8" x2="104.8" y2="24.3" stroke="#1b74c5" stroke-width="1.6"/></svg>
<svg class="a" style="left:1545px;top:359px" width="17" height="18" viewBox="0 0 18 19"><path d="M1,0.5 h15.5 l0.5,4.5 h-1.2 l-0.8,-2 h-9.5 l6.5,6.8 l-7,6.7 h10.5 l1,-2.2 h1.2 l-0.8,4.7 h-16 v-1.5 l7.5,-7.5 l-7.5,-7.5z" fill="#1b74c5"/></svg>
<div class="t lab" style="left:1563px;top:361px;font-size:15px;letter-spacing:0.3px">Value</div>
<div class="a zone" style="top:382px;height:99px"></div>
<div class="a zi" style="top:387px"></div>
<svg class="a" style="left:1564px;top:400px" width="10" height="11"><path d="M0.5,0.5 h8.5 l0.3,2.5 h-0.9 l-0.5,-1.2 h-5 l3.5,3.7 l-3.8,3.8 h5.7 l0.6,-1.3 h0.9 l-0.5,2.8 h-8.8 v-0.8 l4.2,-4.5 l-4.2,-4.3z" fill="#1b74c5"/></svg>
<div class="t zit" style="top:396px">Amount<span style="color:#4d5c73">(SUM)</span></div>
<div class="a" style="left:1535px;top:484px;width:306px;height:210px;border:3px solid #ef4343"></div>
<svg class="a" style="left:1545px;top:504px" width="18" height="17"><rect x="1.5" y="1.5" width="15" height="4" fill="none" stroke="#1b74c5" stroke-width="1.3"/><rect x="1" y="6.5" width="16" height="3.5" fill="#1b74c5"/><rect x="1.5" y="11.5" width="15" height="4" fill="none" stroke="#1b74c5" stroke-width="1.3"/></svg>
<div class="t lab" style="left:1563px;top:505px;font-size:14.5px;letter-spacing:0.7px">Argument</div>
<div class="a zone" style="top:526px;height:152px"></div>
<div class="a zi" style="top:531px"></div><div class="t zit" style="top:541px">Quarter</div>
<div class="a zi" style="top:571px"></div><div class="t zit" style="top:581px">Month</div>
<div class="a zi" style="top:611px;background:#e4e7ee;border-color:#d3d8e2"></div>
<div class="t" style="left:1582px;top:622px;font-size:15px;color:#d9dee7">Date</div>
<div class="a" style="left:1555px;top:620px;width:242px;height:33px;background:#e9ecf1;border:1px solid #ccd3de;box-shadow:0px 2px 3px rgba(0,0,0,0.22);transform:rotate(1.9deg);transform-origin:0 0"><div class="t" style="left:30px;top:9px;font-size:15px;color:#5d6b82">Date</div></div>
<svg class="a" style="left:1648px;top:634px" width="23" height="23" viewBox="0 0 20 20"><path d="M5,9 v-4 a1.2,1.2 0 0 1 2.4,0 v4 M7.4,8 v-5 a1.2,1.2 0 0 1 2.4,0 v5 M9.8,8 v-4 a1.2,1.2 0 0 1 2.4,0 v4 M12.2,8 v-2.5 a1.2,1.2 0 0 1 2.4,0 v6 a6,6 0 0 1 -6,6 h-1 a4,4 0 0 1 -3.5,-2 l-3,-5 a1.2,1.2 0 0 1 2,-1.2 l1.8,2" fill="#fff" stroke="#222" stroke-width="1"/></svg>
<svg class="a" style="left:1545px;top:700px" width="18" height="17"><rect x="1.5" y="1.5" width="4" height="14" fill="none" stroke="#1b74c5" stroke-width="1.3"/><rect x="6.8" y="1" width="4" height="15" fill="#1b74c5"/><rect x="12.3" y="1.5" width="4" height="14" fill="none" stroke="#1b74c5" stroke-width="1.3"/></svg>
<div class="t lab" style="left:1563px;top:701px;font-size:15px;letter-spacing:0.3px">Serie</div>
<div class="a zone" style="top:723px;height:68px"></div>
<div class="a zi" style="top:728px"></div><div class="t zit" style="top:737px">Account Descr</div>
<div class="a" style="left:1843px;top:778px;width:0;height:0;border-left:4px solid transparent;border-right:4px solid transparent;border-top:5px solid #444"></div>
<div class="a rrow" style="top:791px;height:38px;border-top:1px solid #b9c6d6"></div><div class="t rh" style="top:804px">Field Sortings</div>
<div class="a rrow" style="top:829px;height:38px"></div><div class="t rh" style="top:842px">Filters</div>
</body></html>
